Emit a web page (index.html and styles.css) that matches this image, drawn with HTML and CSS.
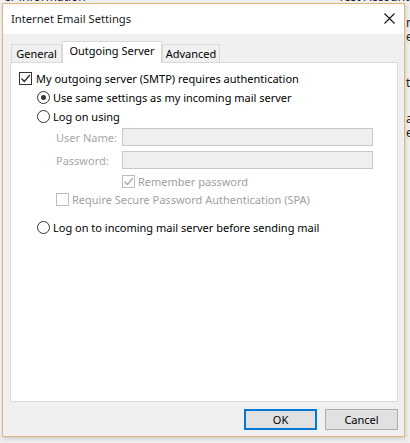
FILE: index.html
```html
<!DOCTYPE html>
<html lang="en">
<head>
  <meta charset="UTF-8">
  <title>Internet Email Settings</title>
  <link rel="stylesheet" href="styles.css">
</head>
<body>
  <!-- window behind the dialog -->
  <div class="behind">
    <span class="behind-left">er information</span>
    <span class="behind-right">Test Account S</span>
    <span class="peek p1">n</span>
    <span class="peek p2">e</span>
    <span class="peek p3">t</span>
    <span class="peek p4">a</span>
    <span class="peek p5">e</span>
  </div>

  <div class="dialog">
    <div class="titlebar">
      <span class="title">Internet Email Settings</span>
      <svg class="close" width="11" height="11" viewBox="0 0 11 11">
        <path d="M0.5 0.5 L10.5 10.5 M10.5 0.5 L0.5 10.5" stroke="#111" stroke-width="1.1" fill="none"/>
      </svg>
    </div>

    <div class="content">
      <div class="tabs">
        <div class="tab t-general">General</div>
        <div class="tab active">Outgoing Server</div>
        <div class="tab t-advanced">Advanced</div>
      </div>

      <div class="panel">
        <div class="row main-check">
          <span class="check">
            <svg width="11" height="11" viewBox="0 0 11 11"><path d="M1.5 5.5 L4.3 8.5 L9.8 2" stroke="#222" stroke-width="1.2" fill="none"/></svg>
          </span>
          <span>My outgoing server (SMTP) requires authentication</span>
        </div>

        <div class="row radio-row">
          <span class="radio selected"></span>
          <span>Use same settings as my incoming mail server</span>
        </div>

        <div class="row radio-row">
          <span class="radio"></span>
          <span>Log on using</span>
        </div>

        <div class="field first">
          <label>User Name:</label>
          <div class="input"></div>
        </div>
        <div class="field">
          <label>Password:</label>
          <div class="input"></div>
        </div>

        <div class="row remember disabled">
          <span class="check dim">
            <svg width="11" height="11" viewBox="0 0 11 11"><path d="M1.5 5.5 L4.3 8.5 L9.8 2" stroke="#aaa" stroke-width="1.2" fill="none"/></svg>
          </span>
          <span>Remember password</span>
        </div>

        <div class="row spa disabled">
          <span class="check dim"></span>
          <span>Require Secure Password Authentication (SPA)</span>
        </div>

        <div class="row radio-row last">
          <span class="radio"></span>
          <span>Log on to incoming mail server before sending mail</span>
        </div>
      </div>

      <div class="buttons">
        <button class="btn default">OK</button>
        <button class="btn">Cancel</button>
      </div>
    </div>
  </div>
</body>
</html>
```

FILE: styles.css
```css
body {
    margin: 0;
    width: 410px;
    height: 443px;
    overflow: hidden;
    background-color: #f0f0f0;
    font-family: "Noto Sans", "Open Sans", sans-serif;
    font-size: 11px;
    color: #000;
    position: relative;
    white-space: nowrap;
}

/* window behind */
.behind {
    position: absolute;
    inset: 0;
    background-color: #f0f0f0;
}

.behind span {
    position: absolute;
    font-size: 12px;
    line-height: 13px;
    color: #222;
}

.behind-left {
    left: 4px;
    top: -10px;
}

.behind-right {
    left: 338px;
    top: -10px;
}

.peek { left: 406px; }
.p1 { top: 16px; }
.p2 { top: 30px; }
.p3 { top: 76px; }
.p4 { top: 112px; }
.p5 { top: 126px; }

/* dialog */
.dialog {
    position: absolute;
    left: 2px;
    top: 3px;
    width: 401px;
    height: 432px;
    border: 1px solid #e2b676;
    background-color: #f0f0f0;
    display: flex;
    flex-direction: column;
    box-shadow: 1px 2px 4px rgba(0, 0, 0, 0.15);
}

.titlebar {
    height: 30px;
    background-color: #fff;
    display: flex;
    align-items: center;
    justify-content: space-between;
    padding: 0 9px 0 8px;
    flex-shrink: 0;
}

.title {
    font-size: 11.2px;
    color: #1a1a1a;
    margin-top: -2px;
}

.close {
    margin-top: -2px;
}

.content {
    flex: 1;
    padding: 7px 6px 0 7px;
    display: flex;
    flex-direction: column;
}

.tabs {
    display: flex;
    align-items: flex-end;
    padding-left: 1px;
    height: 21px;
    position: relative;
    z-index: 1;
}

.tab {
    box-sizing: border-box;
    border: 1px solid #d9d9d9;
    border-bottom: none;
    background-color: #f0f0f0;
    height: 18px;
    line-height: 17px;
    text-align: center;
}

.t-general {
    width: 51px;
}

.tab.active {
    background-color: #fff;
    width: 100px;
    height: 22px;
    line-height: 18px;
    margin-bottom: -1px;
}

.t-advanced {
    width: 58px;
}

.panel {
    height: 338px;
    background-color: #fff;
    border: 1px solid #d9d9d9;
    padding: 0 0 0 8px;
}

.row {
    display: flex;
    align-items: center;
    height: 19px;
}

.main-check {
    margin-top: 6px;
}

.check {
    width: 11px;
    height: 11px;
    border: 1px solid #333;
    background-color: #fff;
    display: flex;
    align-items: center;
    justify-content: center;
    margin-right: 4px;
    flex-shrink: 0;
}

.check.dim {
    border-color: #bcbcbc;
    margin-right: 3px;
}

.radio-row {
    padding-left: 18px;
}

.radio {
    width: 11px;
    height: 11px;
    border: 1px solid #333;
    border-radius: 50%;
    margin-right: 3px;
    flex-shrink: 0;
    position: relative;
}

.radio.selected::after {
    content: "";
    position: absolute;
    left: 3px;
    top: 3px;
    width: 5px;
    height: 5px;
    border-radius: 50%;
    background-color: #333;
}

.field {
    display: flex;
    align-items: center;
    padding-left: 37px;
    margin-top: 5px;
}

.field.first {
    margin-top: 2px;
}

.field label {
    width: 66px;
    color: #a6a6a6;
}

.input {
    width: 249px;
    height: 16px;
    border: 1px solid #c8c8c8;
    background-color: #efefef;
}

.disabled {
    color: #a0a0a0;
}

.remember {
    padding-left: 103px;
    margin-top: 4px;
    height: 17px;
}

.spa {
    padding-left: 37px;
    margin-top: 1px;
    height: 17px;
}

.last {
    margin-top: 10px;
}

.buttons {
    display: flex;
    justify-content: flex-end;
    gap: 8px;
    padding: 7px 0 0 0;
}

.btn {
    width: 73px;
    height: 21px;
    font-family: "Noto Sans", "Open Sans", sans-serif;
    font-size: 11px;
    color: #000;
    background-color: #e1e1e1;
    border: 1px solid #adadad;
    padding: 0;
}

.btn.default {
    border: 2px solid #0078d7;
}
```
